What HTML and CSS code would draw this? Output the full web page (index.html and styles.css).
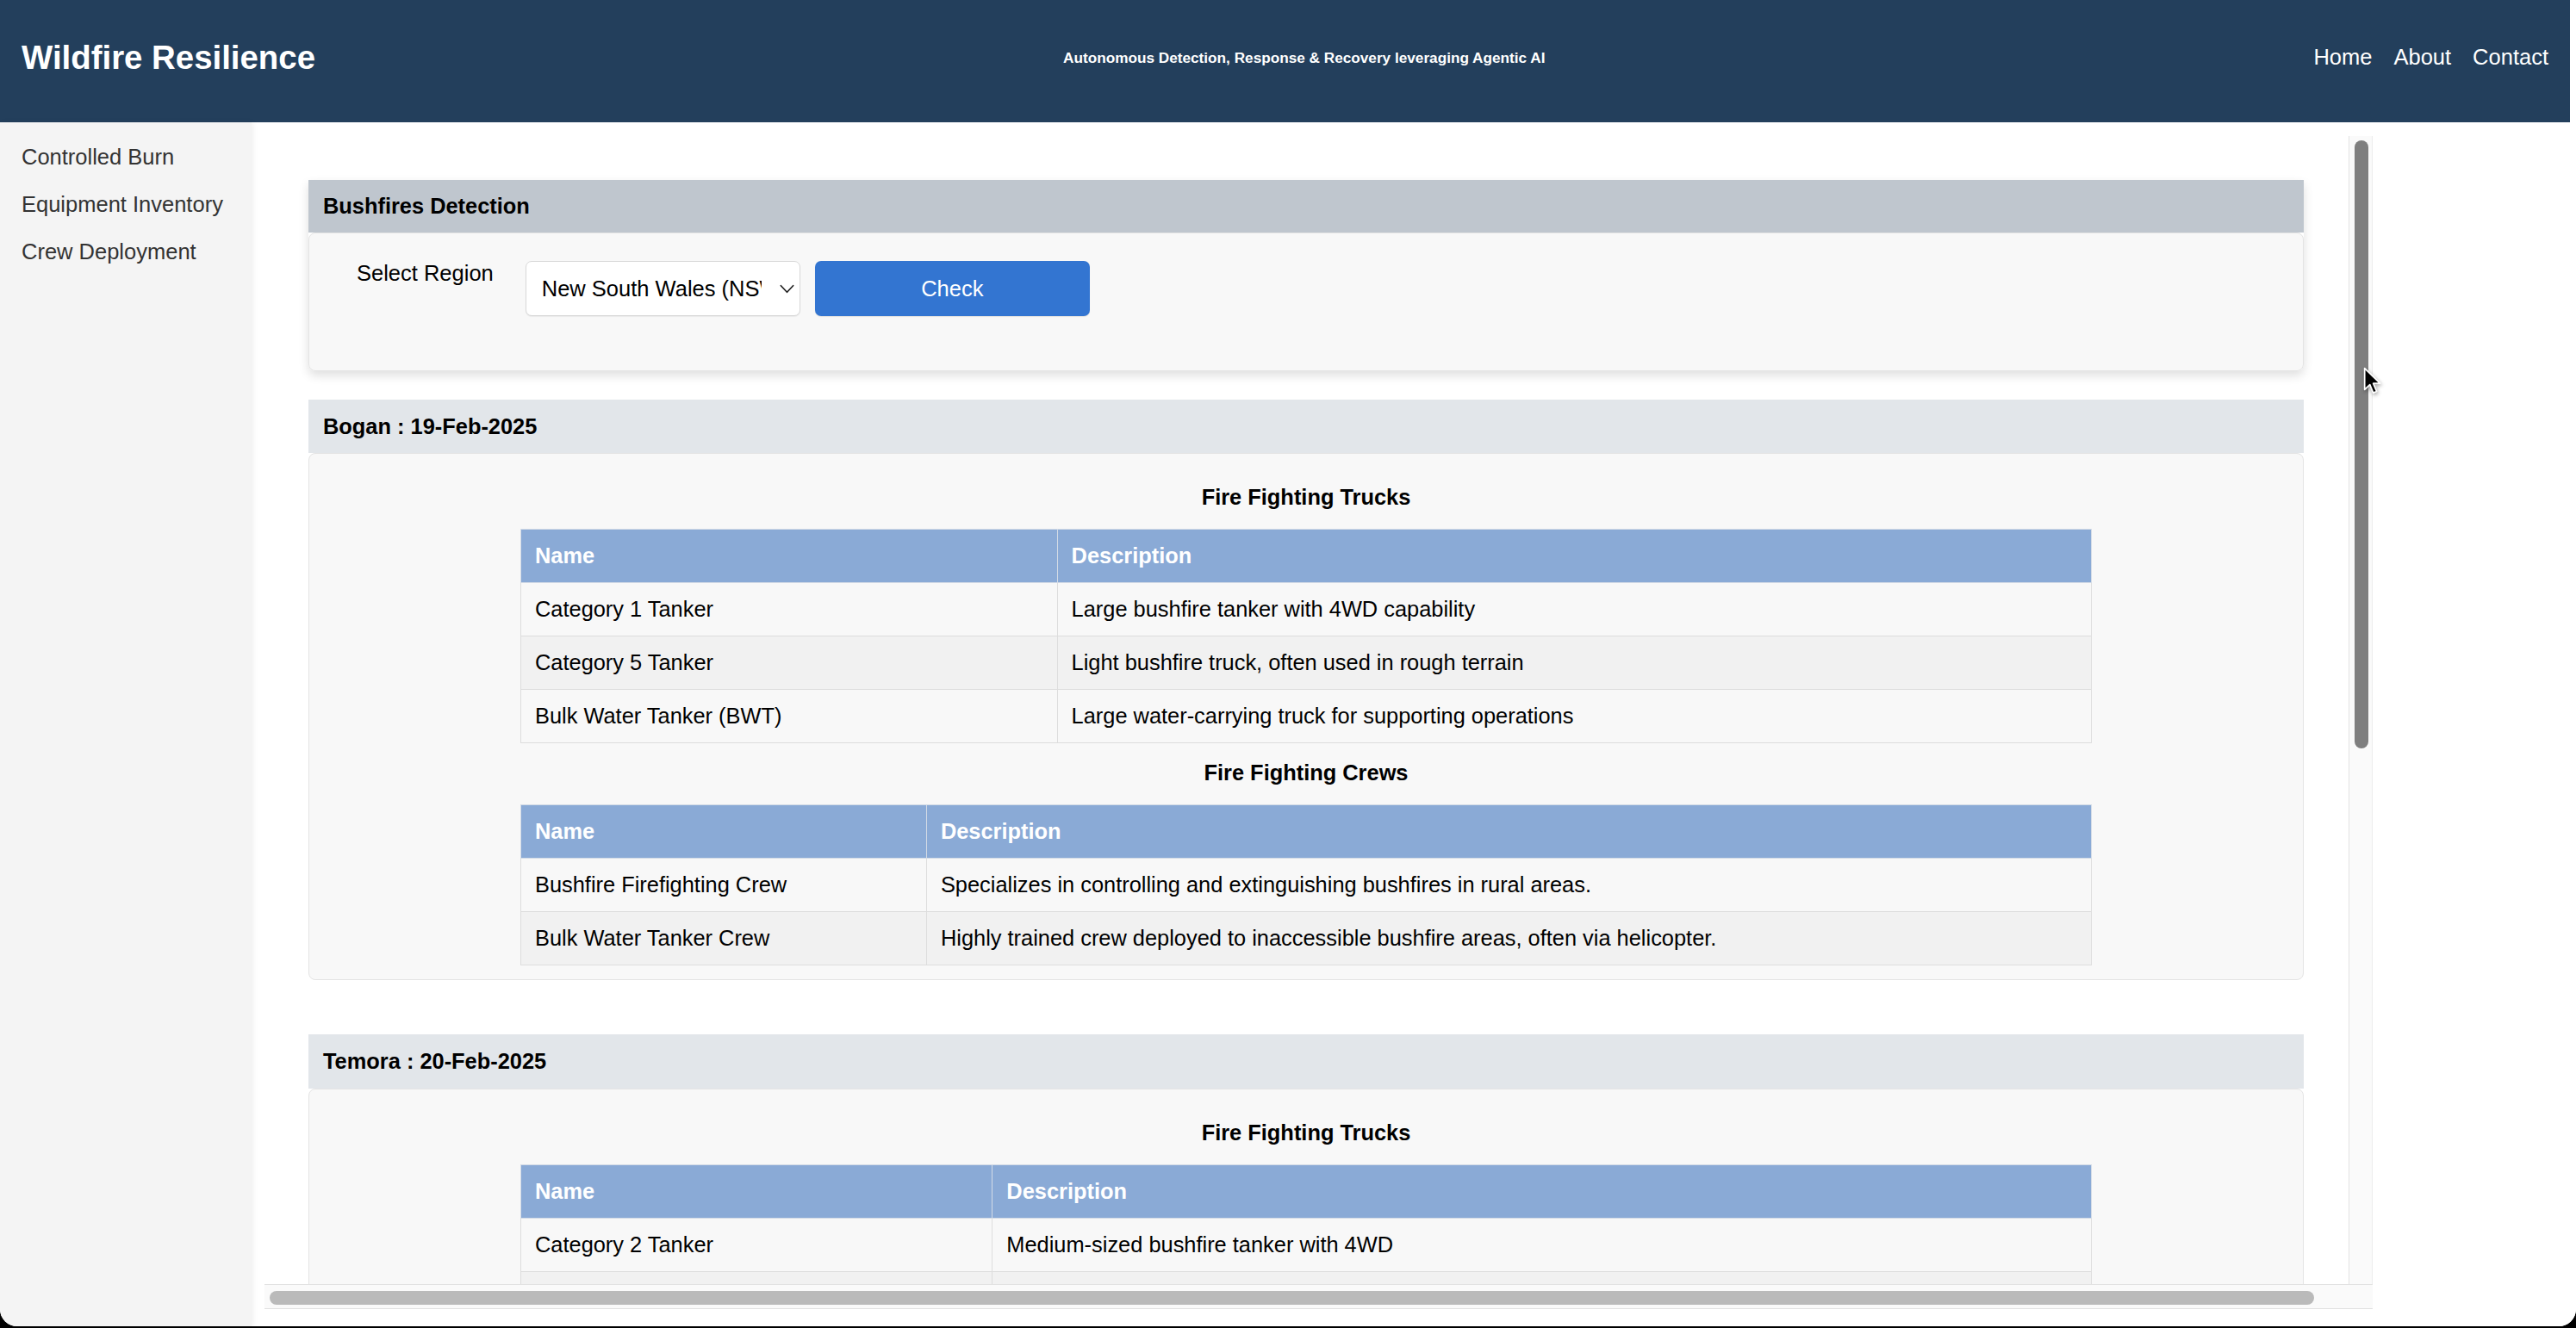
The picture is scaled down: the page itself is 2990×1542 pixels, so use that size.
FILE: index.html
```html
<!DOCTYPE html>
<html lang="en">
<head>
<meta charset="utf-8">
<title>Wildfire Resilience</title>
<link rel="stylesheet" href="styles.css">
</head>
<body>
<div class="app">
  <header class="topbar">
    <div class="brand">Wildfire Resilience</div>
    <div class="tagline">Autonomous Detection, Response &amp; Recovery leveraging Agentic AI</div>
    <nav class="topnav">
      <a href="#">Home</a>
      <a href="#">About</a>
      <a href="#">Contact</a>
    </nav>
  </header>
  <div class="layout">
    <aside class="sidebar">
      <a href="#">Controlled Burn</a>
      <a href="#">Equipment Inventory</a>
      <a href="#">Crew Deployment</a>
    </aside>
    <main class="main">
      <div class="scroller">
        <div class="viewport">
          <div class="scroll-inner">
            <section class="detect">
              <div class="card-head detect-head">Bushfires Detection</div>
              <div class="card-body detect-body">
                <div class="form-row">
                  <label class="form-label" for="region">Select Region</label>
                  <div class="select-wrap">
                    <select id="region" class="region-select">
                      <option>New South Wales (NSW)</option>
                      <option>Victoria (VIC)</option>
                      <option>Queensland (QLD)</option>
                    </select>
                    <svg class="chevron" viewBox="0 0 18 11" aria-hidden="true"><path d="M1.5 1.5 L9 9.5 L16.5 1.5" fill="none" stroke="#222" stroke-width="1.8" stroke-linecap="round" stroke-linejoin="round"/></svg>
                  </div>
                  <button class="check-btn" type="button">Check</button>
                </div>
              </div>
            </section>

            <section class="result">
              <div class="card-head result-head">Bogan : 19-Feb-2025</div>
              <div class="card-body result-body">
                <h4 class="section-title">Fire Fighting Trucks</h4>
                <table class="data-table">
                  <thead><tr><th>Name</th><th>Description</th></tr></thead>
                  <tbody>
                    <tr><td>Category 1 Tanker</td><td>Large bushfire tanker with 4WD capability</td></tr>
                    <tr><td>Category 5 Tanker</td><td>Light bushfire truck, often used in rough terrain</td></tr>
                    <tr><td>Bulk Water Tanker (BWT)</td><td>Large water-carrying truck for supporting operations</td></tr>
                  </tbody>
                </table>
                <h4 class="section-title">Fire Fighting Crews</h4>
                <table class="data-table">
                  <thead><tr><th>Name</th><th>Description</th></tr></thead>
                  <tbody>
                    <tr><td>Bushfire Firefighting Crew</td><td>Specializes in controlling and extinguishing bushfires in rural areas.</td></tr>
                    <tr><td>Bulk Water Tanker Crew</td><td>Highly trained crew deployed to inaccessible bushfire areas, often via helicopter.</td></tr>
                  </tbody>
                </table>
              </div>
            </section>

            <section class="result">
              <div class="card-head result-head">Temora : 20-Feb-2025</div>
              <div class="card-body result-body">
                <h4 class="section-title">Fire Fighting Trucks</h4>
                <table class="data-table">
                  <thead><tr><th>Name</th><th>Description</th></tr></thead>
                  <tbody>
                    <tr><td>Category 2 Tanker</td><td>Medium-sized bushfire tanker with 4WD</td></tr>
                    <tr class="below-fold"><td>Category 7 Tanker</td><td>Light tanker designed for remote fire trail areas</td></tr>
                  </tbody>
                </table>
              </div>
            </section>
          </div>
        </div>
        <div class="vbar"><div class="vthumb"></div></div>
        <div class="hbar"><div class="hthumb"></div></div>
      </div>
    </main>
  </div>
  <svg class="cursor" viewBox="0 0 20 31" aria-hidden="true">
    <path d="M1.5 1.5 L1.5 24 L7 18.8 L10.6 27.5 L14.2 26 L10.6 17.5 L17.8 17.5 Z" fill="#000" stroke="#fff" stroke-width="1.6" stroke-linejoin="round"/>
  </svg>
</div>
</body>
</html>
```

FILE: styles.css
```css
html, body {
  margin: 0;
  padding: 0;
  height: 100%;
}

body {
  background: #000;
  font-family: "Liberation Sans", Arial, Helvetica, sans-serif;
  color: #000;
  overflow: hidden;
}

.app {
  position: relative;
  height: 1540px;
  background: #fff;
  border-radius: 0 0 20px 20px;
  overflow: hidden;
  display: flex;
  flex-direction: column;
}

/* ---------- top bar ---------- */
.topbar {
  flex: 0 0 142px;
  height: 142px;
  box-sizing: border-box;
  margin-right: 7px;
  padding: 0 25px 9px 25px;
  background: #233f5c;
  color: #fff;
  display: flex;
  align-items: center;
  justify-content: space-between;
}

.brand {
  font-size: 38.4px;
  font-weight: bold;
  line-height: 44px;
}

.tagline {
  font-size: 17.2px;
  font-weight: bold;
  line-height: 20px;
  margin-right: 24px;
}

.topnav {
  display: flex;
  gap: 25px;
  font-size: 25.5px;
  line-height: 29px;
}

.topnav a {
  color: #fff;
  text-decoration: none;
}

/* ---------- layout ---------- */
.layout {
  flex: 1;
  display: flex;
  min-height: 0;
}

.sidebar {
  position: relative;
  z-index: 2;
  flex: 0 0 292px;
  width: 292px;
  box-sizing: border-box;
  padding: 13px 0;
  background: #f4f4f4;
  box-shadow: 2px 0 6px rgba(0, 0, 0, 0.06);
}

.sidebar a {
  display: block;
  padding: 13px 25px;
  font-size: 25.5px;
  line-height: 29px;
  color: #333;
  text-decoration: none;
}

.main {
  flex: 1;
  padding: 16px 0 0 15px;
  background: #fff;
  min-width: 0;
}

/* ---------- scroll box with drawn scrollbars ---------- */
.scroller {
  width: 2447px;
  height: 1362px;
  display: grid;
  grid-template-columns: 1fr 28px;
  grid-template-rows: 1fr 29px;
  background: #fff;
}

.viewport {
  overflow: hidden;
  min-width: 0;
  min-height: 0;
}

.vbar {
  box-sizing: border-box;
  padding: 5px 4px 0 6px;
  background: #fafafa;
  border-left: 1px solid #e4e4e4;
  border-right: 1px solid #ececec;
}

.vthumb {
  height: 706px;
  border-radius: 8px;
  background: #7f7f7f;
}

.hbar {
  grid-column: 1 / -1;
  box-sizing: border-box;
  padding: 7px 0 0 6px;
  background: #fafafa;
  border-top: 1px solid #e2e2e2;
  border-bottom: 1px solid #e2e2e2;
}

.hthumb {
  width: 2373px;
  height: 16px;
  border-radius: 8px;
  background: #bababa;
}

.scroll-inner {
  padding: 51px 52px 0 51px;
}

/* ---------- cards ---------- */
.card-head {
  font-size: 25.4px;
  font-weight: bold;
  line-height: 29px;
  padding: 16px 17px;
}

.card-body {
  background: #f8f8f8;
  border: 1px solid #e4e4e4;
  border-radius: 8px;
}

.detect {
  margin-bottom: 33px;
  border-radius: 0 0 8px 8px;
  box-shadow: 0 5px 12px rgba(0, 0, 0, 0.13);
}

.detect-head {
  background: #bfc6ce;
}

.detect-body {
  padding: 32px 17px 63px;
}

.form-row {
  display: flex;
  align-items: flex-start;
  padding-left: 38px;
}

.form-label {
  font-size: 25.5px;
  line-height: 29px;
  margin-right: 37px;
}

.select-wrap {
  position: relative;
  width: 319px;
  height: 64px;
}

.region-select {
  -webkit-appearance: none;
  appearance: none;
  width: 100%;
  height: 100%;
  box-sizing: border-box;
  border: 1px solid #d8d8d8;
  border-radius: 7px;
  background: #fff;
  font-family: inherit;
  font-size: 25.5px;
  color: #000;
  padding: 0 44px 0 18px;
  box-shadow: 0 1px 1px rgba(0, 0, 0, 0.06);
}

.chevron {
  position: absolute;
  right: 7px;
  top: 27px;
  width: 17px;
  height: 11px;
  pointer-events: none;
}

.check-btn {
  width: 319px;
  height: 64px;
  margin-left: 17px;
  border: none;
  border-radius: 7px;
  background: #3375d1;
  color: #fff;
  font-family: inherit;
  font-size: 25.5px;
  box-shadow: 0 1px 1px rgba(0, 0, 0, 0.1);
}

.result {
  margin-bottom: 63px;
}

.result-head {
  background: #e2e6ea;
  padding: 16.7px 17px;
}

.result-body {
  padding: 16px 17px;
}

.section-title {
  margin: 20px 0 22px;
  text-align: center;
  font-size: 25.4px;
  line-height: 29px;
  font-weight: bold;
}

/* ---------- tables ---------- */
.data-table {
  width: 80%;
  margin: 0 auto;
  border-collapse: collapse;
  font-size: 25.4px;
  line-height: 29px;
}

.data-table th,
.data-table td {
  padding: 16px;
  border: 1px solid #dddddd;
  text-align: left;
}

.data-table th {
  background: #8aaad6;
  color: #fff;
  font-weight: bold;
  border-color: #d3dbe6;
}

.data-table tbody tr:nth-child(odd) td {
  background: #f8f8f8;
}

.data-table tbody tr:nth-child(even) td {
  background: #f1f1f1;
}

.below-fold td {
  color: transparent;
}

/* ---------- pointer ---------- */
.cursor {
  position: absolute;
  left: 2743px;
  top: 426px;
  width: 22px;
  height: 34px;
  z-index: 10;
  filter: drop-shadow(1px 2px 2px rgba(0, 0, 0, 0.35));
}
```
